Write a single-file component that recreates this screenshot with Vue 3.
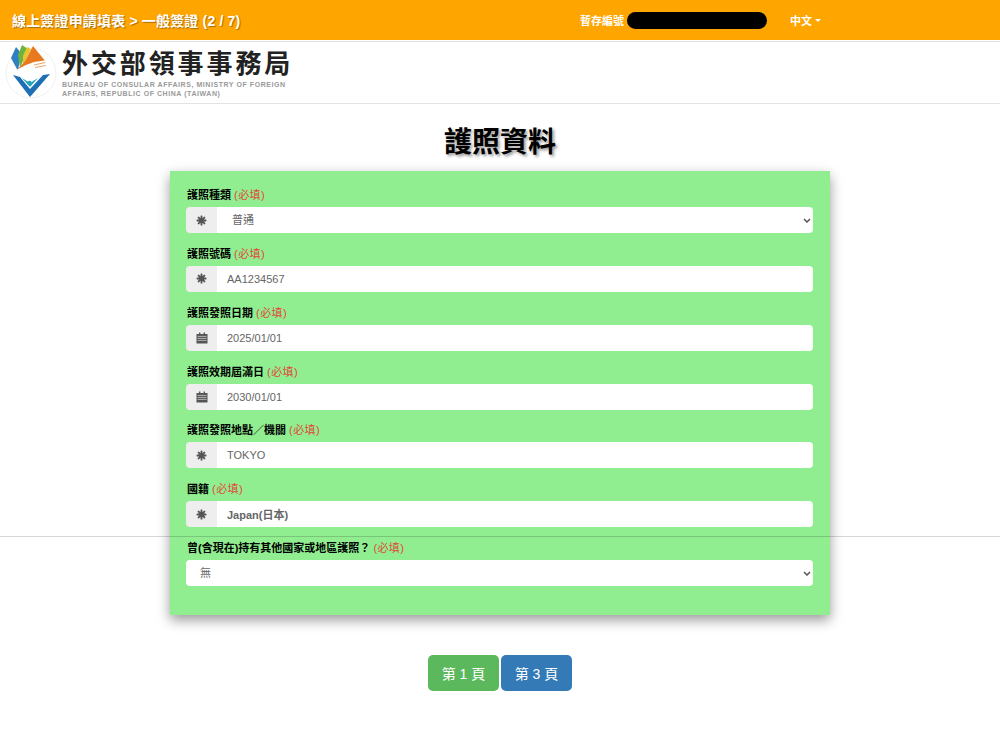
<script setup>
const fields = [
  { label: '護照種類', type: 'select', icon: 'star', value: '普通', pad: 'wide' },
  { label: '護照號碼', type: 'input', icon: 'star', value: 'AA1234567' },
  { label: '護照發照日期', type: 'input', icon: 'cal', value: '2025/01/01' },
  { label: '護照效期屆滿日', type: 'input', icon: 'cal', value: '2030/01/01' },
  { label: '護照發照地點／機關', type: 'input', icon: 'star', value: 'TOKYO' },
  { label: '國籍', type: 'input', icon: 'star', value: 'Japan(日本)', bold: true },
  { label: '曾(含現在)持有其他國家或地區護照？', type: 'select', value: '無' },
]
const spokes = [0, 45, 90, 135]
</script>

<template>
  <div class="page">
    <header class="topbar">
      <div class="crumb">線上簽證申請填表 &gt; 一般簽證 (2 / 7)</div>
      <div class="save">
        <span>暫存編號</span>
        <span class="redact"></span>
      </div>
      <div class="lang">中文<i class="caret"></i></div>
    </header>

    <div class="banner">
      <svg class="logo" viewBox="0 1 60 62" width="60" height="62">
        <circle cx="31" cy="33" r="25" fill="#fff" stroke="#f0f0f0" stroke-width="1" />
        <polygon points="16,7 21,13 18,31 11,18" fill="#2f7fc1" />
        <polygon points="22,5 28,9 20,28 18,15" fill="#6cb33f" />
        <polygon points="27,7 31,9 23,25 23,16" fill="#e6c62f" />
        <polygon points="33,6 46,22 38,25 27,32 17,30 25,21" fill="#e8791f" />
        <path d="M16 30 L26 25 L34 22 L48 20 L45 22.5 L49 24 L44 26 L46 28.5 L39 29.5 L33 33.5 L24 33.5 Z" fill="#fff" />
        <path d="M34 25 L45 22.5 M35 27.5 L46 25.5" stroke="#e8791f" stroke-width="0.7" />
        <path d="M13 35 L30 57 L50 34 L43 35 L30 49 L20 37 Z" fill="#1f6fb5" />
        <circle cx="29.5" cy="43" r="2.2" fill="#22a5b8" />
        <path d="M22 38 L30 47 L38 38 L30 43 Z" fill="#22a5b8" />
      </svg>
      <div class="brand">
        <div class="brand-zh">外交部領事事務局</div>
        <div class="brand-en">BUREAU OF CONSULAR AFFAIRS, MINISTRY OF FOREIGN<br />AFFAIRS, REPUBLIC OF CHINA (TAIWAN)</div>
      </div>
    </div>

    <h1 class="title">護照資料</h1>

    <form class="card" @submit.prevent>
      <div v-for="f in fields" :key="f.label" class="group">
        <label class="lbl">{{ f.label }} <span class="req">(必填)</span></label>
        <div class="ctl">
          <span v-if="f.icon" class="addon">
            <svg v-if="f.icon === 'star'" viewBox="0 0 12 12" width="11" height="11">
              <g fill="#555">
                <rect v-for="a in spokes" :key="a" x="5" y="0.6" width="2" height="10.8" rx="0.6" :transform="`rotate(${a} 6 6)`" />
              </g>
              <circle cx="6" cy="6" r="3" fill="#555" />
            </svg>
            <svg v-else viewBox="0 0 12 12" width="12" height="12">
              <path d="M0.5 2h11v9.5H0.5z" fill="#555" />
              <rect x="3" y="0.5" width="1.4" height="2.2" fill="#555" />
              <rect x="7.6" y="0.5" width="1.4" height="2.2" fill="#555" />
              <path d="M1.5 4.4h9M1.5 6.4h9M1.5 8.4h9" stroke="#eee" stroke-width="0.6" />
            </svg>
          </span>
          <template v-if="f.type === 'select'">
            <select class="field sel" :class="{ wide: f.pad }">
              <option>{{ f.value }}</option>
            </select>
            <svg class="chev" viewBox="0 0 8 5" width="8" height="5">
              <path d="M1 1 L4 4 L7 1" fill="none" stroke="#555" stroke-width="1.5" />
            </svg>
          </template>
          <input v-else class="field" :class="{ strong: f.bold }" :value="f.value" readonly />
        </div>
      </div>
    </form>

    <nav class="pager">
      <button class="btn green" type="button">第 1 頁</button>
      <button class="btn blue" type="button">第 3 頁</button>
    </nav>

    <div class="hairline"></div>
  </div>
</template>

<style scoped>
.page {
  position: relative;
  min-height: 747px;
  background: #fff;
  font-family: "Liberation Sans", "Noto Sans CJK TC", sans-serif;
  overflow: hidden;
}
.topbar {
  height: 40px;
  background: #ffa500;
  color: #fff;
  display: flex;
  align-items: center;
  padding-left: 12px;
  box-sizing: border-box;
}
.crumb {
  font-size: 14px;
  font-weight: 700;
  letter-spacing: 0.17px;
  width: 568px;
  text-shadow: 1px 1px 1px rgba(0, 0, 0, 0.35);
  white-space: nowrap;
}
.save {
  width: 210px;
  display: flex;
  align-items: center;
  font-size: 11px;
  font-weight: 700;
  white-space: nowrap;
}
.redact {
  width: 140px;
  height: 17px;
  background: #000;
  border-radius: 9px;
  margin-left: 3px;
}
.lang {
  font-size: 11px;
  font-weight: 700;
  display: flex;
  align-items: center;
}
.caret {
  margin-left: 3px;
  border-left: 3px solid transparent;
  border-right: 3px solid transparent;
  border-top: 3px solid #fff;
}
.banner {
  margin-top: 1px;
  height: 63px;
  box-sizing: border-box;
  border: 1px solid #e3e3e3;
  border-left: 0;
  border-right: 0;
  display: flex;
  align-items: center;
  background: #fff;
}
.logo {
  flex: none;
  margin-top: -1px;
}
.brand {
  margin-left: 2px;
  display: flex;
  flex-direction: column;
}
.brand-zh {
  font-size: 26px;
  line-height: 30px;
  font-weight: 700;
  letter-spacing: 2.9px;
  color: #222;
  font-family: "Noto Sans CJK TC", sans-serif;
  white-space: nowrap;
}
.brand-en {
  margin-top: 3px;
  font-size: 7px;
  line-height: 9.5px;
  font-weight: 700;
  letter-spacing: 0.56px;
  color: #999;
  white-space: nowrap;
}
.title {
  margin: 0;
  height: 67px;
  line-height: 77px;
  text-align: center;
  font-size: 28px;
  font-weight: 700;
  color: #000;
  text-shadow: 2px 2px 3px rgba(0, 0, 0, 0.4);
}
.card {
  width: 660px;
  margin: 0 auto;
  box-sizing: border-box;
  background: #90ee90;
  padding: 14px 17px 16px 16px;
  height: 444px;
  box-shadow: 0 5px 12px rgba(0, 0, 0, 0.4);
  display: flex;
  flex-direction: column;
  gap: 10.85px;
}
.group {
  display: flex;
  flex-direction: column;
}
.lbl {
  height: 22px;
  line-height: 20px;
  padding-left: 1px;
  font-size: 11px;
  font-weight: 700;
  color: #000;
  white-space: nowrap;
}
.req {
  color: #e0483a;
  font-weight: 400;
  letter-spacing: 0.4px;
}
.ctl {
  position: relative;
  display: flex;
  height: 26px;
}
.addon {
  flex: none;
  width: 31px;
  box-sizing: border-box;
  background: #eeeeee;
  border-radius: 4px 0 0 4px;
  display: flex;
  align-items: center;
  justify-content: center;
}
.field {
  flex: 1;
  min-width: 0;
  height: 26px;
  box-sizing: border-box;
  border: 0;
  outline: 0;
  background: #fff;
  border-radius: 0 4px 4px 0;
  padding: 0 10px;
  font: 400 11px "Liberation Sans", "Noto Sans CJK TC", sans-serif;
  color: #666;
}
.field.strong {
  font-weight: 700;
}
.sel {
  appearance: none;
  border-radius: 4px;
  padding-left: 14px;
}
.sel.wide {
  border-radius: 0 4px 4px 0;
  padding-left: 15px;
}
.chev {
  position: absolute;
  right: 2px;
  top: 11px;
  pointer-events: none;
}
.pager {
  margin-top: 40px;
  display: flex;
  justify-content: center;
  gap: 2.5px;
}
.btn {
  width: 70.5px;
  height: 36px;
  border: 0;
  border-radius: 5px;
  color: #fff;
  font: 400 14px "Liberation Sans", "Noto Sans CJK TC", sans-serif;
  padding: 0;
}
.green {
  background: #5cb85c;
}
.blue {
  background: #337ab7;
}
.hairline {
  position: absolute;
  left: 0;
  right: 0;
  top: 536px;
  height: 1px;
  background: rgba(0, 0, 0, 0.16);
}
</style>
